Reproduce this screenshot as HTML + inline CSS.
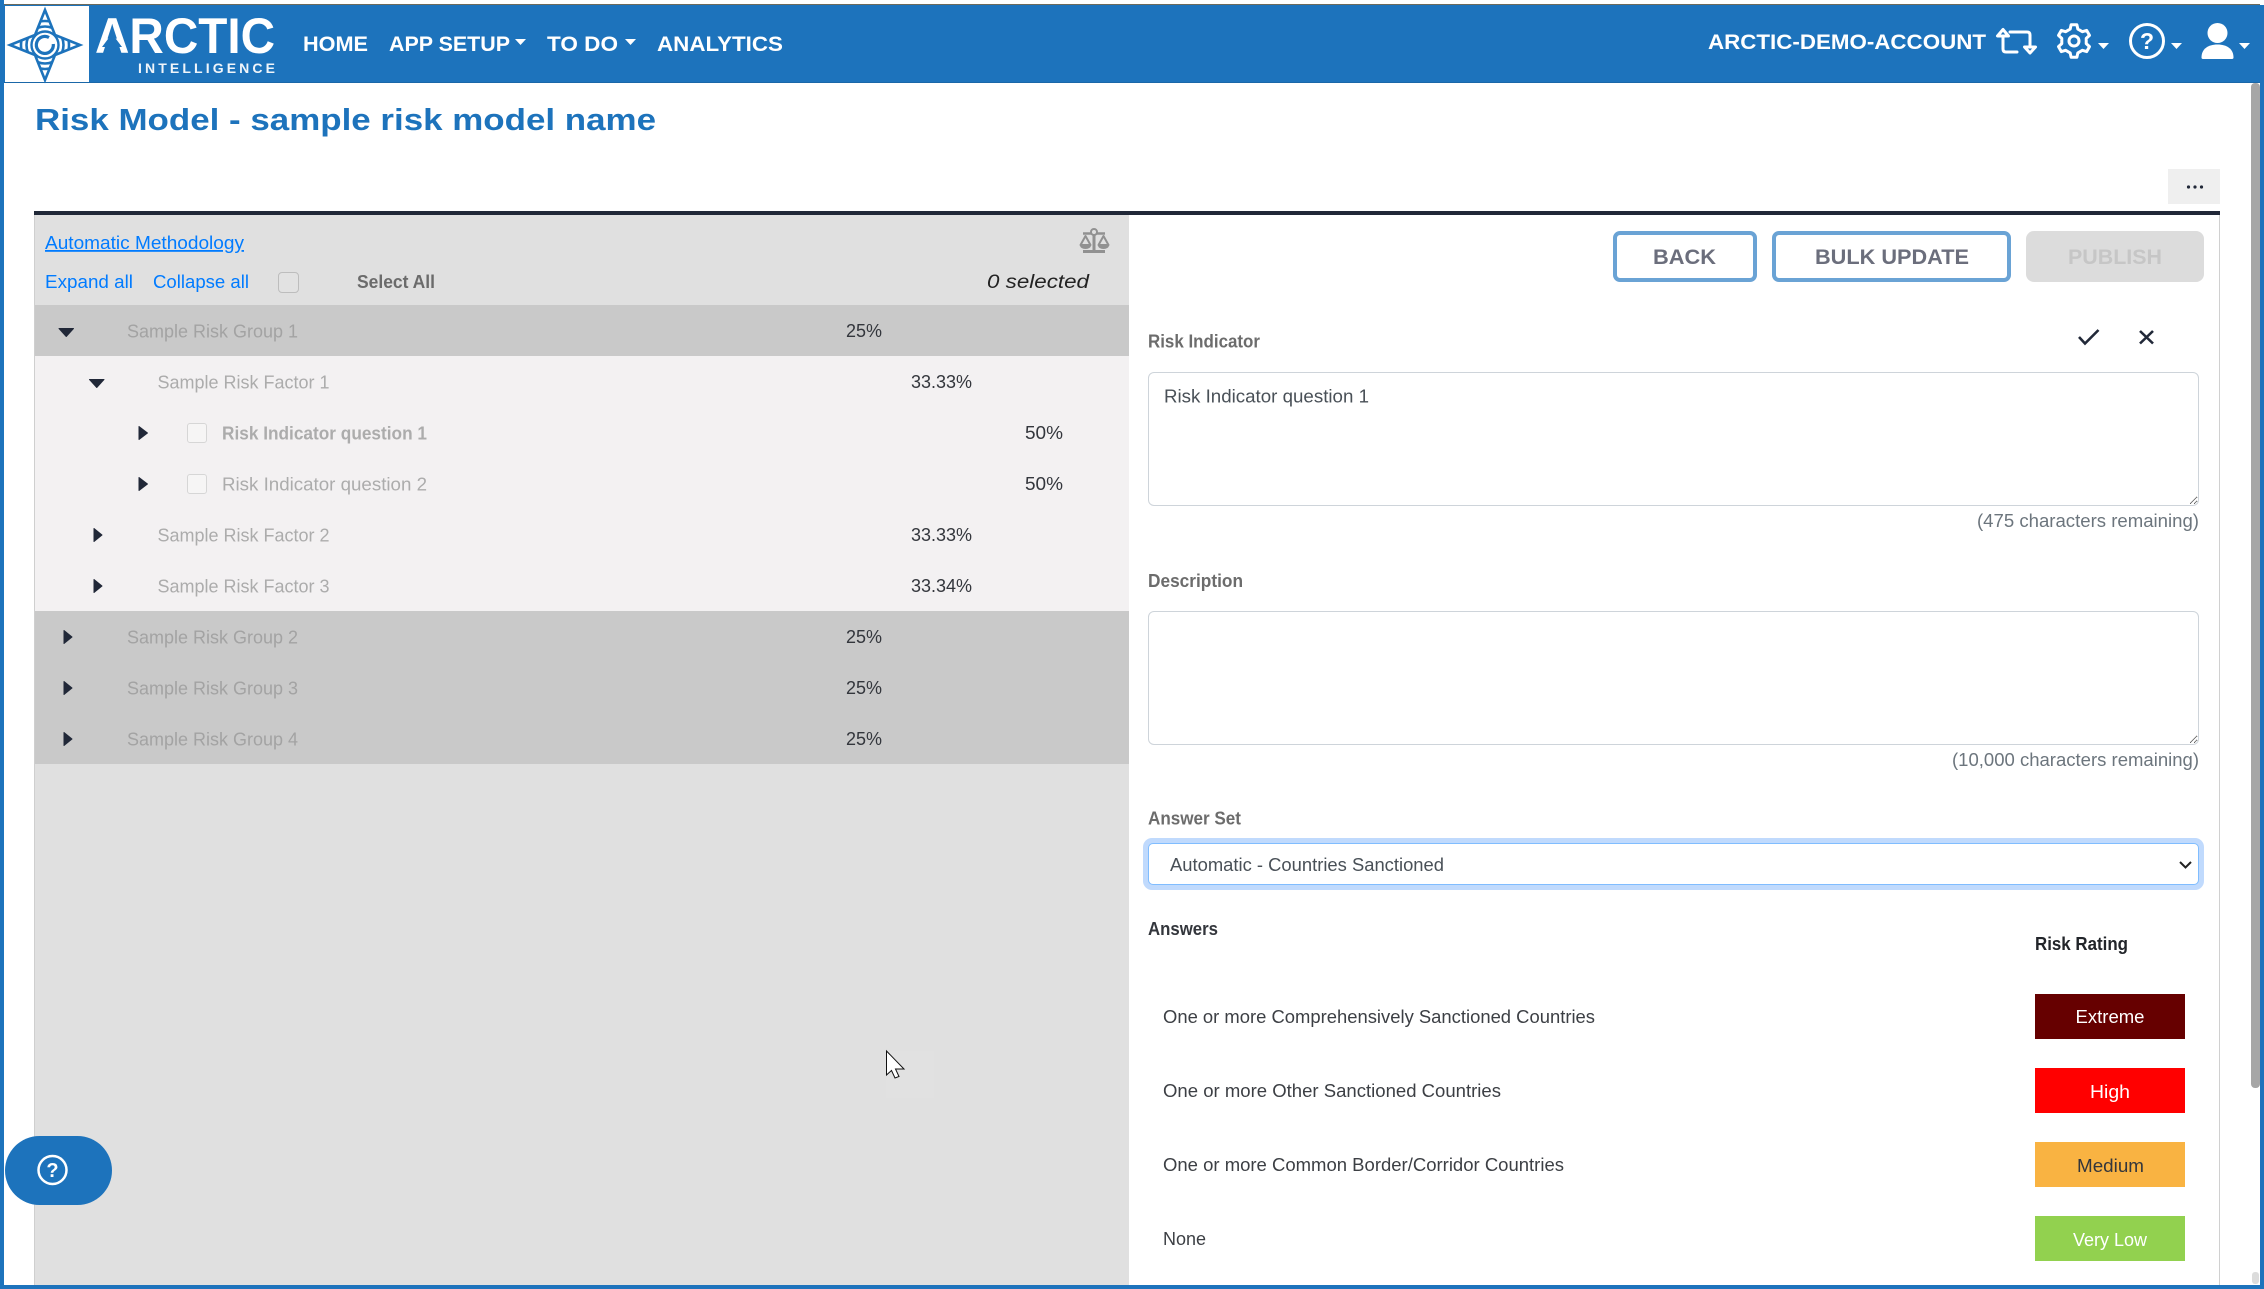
<!DOCTYPE html>
<html lang="en">
<head>
<meta charset="utf-8">
<title>Risk Model - sample risk model name</title>
<style>
html,body{margin:0;padding:0;width:2264px;height:1289px;overflow:hidden;background:#fff;font-family:"Liberation Sans",sans-serif}
.b{position:absolute;box-sizing:border-box}
textarea{position:absolute;box-sizing:border-box;margin:0;padding:0;background:#fff;border:1px solid #ced4da;border-radius:6px;outline:none;resize:vertical;left:1148px;width:1051px}
svg.o{position:absolute;left:0;top:0;width:2264px;height:1289px;pointer-events:none}
text{font-family:"Liberation Sans",sans-serif;font-size:18px}
.nav{font-size:21px;font-weight:700;fill:#fff}
.btn{font-size:21px;font-weight:700;fill:#6b6e7c}
.lnk{fill:#007bff}
.g{fill:#a3a3a3}
.f{fill:#acacac}
.p{fill:#33363c}
.l{font-weight:700;fill:#6c6c6c}
.a{fill:#3c3f44}
.m{fill:#6c757d}
</style>
</head>
<body>
<!-- frame -->
<div class="b" style="left:0;top:0;width:4px;height:1289px;background:#1d73bc"></div>
<div class="b" style="left:2260px;top:5px;width:4px;height:1284px;background:#1d73bc"></div>
<div class="b" style="left:0;top:1285px;width:2264px;height:4px;background:#1d73bc"></div>
<!-- header -->
<div class="b" style="left:4px;top:4px;width:2256px;height:1px;background:#6b6a5c"></div>
<div class="b" style="left:4px;top:5px;width:2256px;height:78px;background:#1d73bc;border-bottom:1px solid #1a67a8"></div>
<div class="b" style="left:5px;top:6px;width:84px;height:76px;background:#fff"></div>
<!-- more -->
<div class="b" style="left:2168px;top:169px;width:52px;height:35px;background:#efefef"></div>
<!-- main -->
<div class="b" style="left:34px;top:211px;width:2186px;height:4px;background:#212838"></div>
<div class="b" style="left:34px;top:215px;width:1095px;height:1070px;background:#e0e0e0;border-left:1px solid #cfcfcf"></div>
<div class="b" style="left:2219px;top:215px;width:1px;height:1070px;background:#d0d0d0"></div>
<div class="b" style="left:35px;top:305px;width:1094px;height:51px;background:#c9c9c9"></div>
<div class="b" style="left:35px;top:356px;width:1094px;height:255px;background:#f3f1f2"></div>
<div class="b" style="left:35px;top:611px;width:1094px;height:153px;background:#c9c9c9"></div>
<!-- checkboxes -->
<div class="b" style="left:278px;top:272px;width:21px;height:21px;border:1px solid #bdbdbd;border-radius:4px;background:#e2e2e2"></div>
<div class="b" style="left:187px;top:423px;width:20px;height:20px;border:1px solid #d6d6d6;border-radius:3px;background:#f6f5f5"></div>
<div class="b" style="left:187px;top:474px;width:20px;height:20px;border:1px solid #d6d6d6;border-radius:3px;background:#f6f5f5"></div>
<!-- buttons -->
<div class="b" style="left:1613px;top:231px;width:144px;height:51px;border:4px solid #6aa3d5;border-radius:7px;background:#fff"></div>
<div class="b" style="left:1772px;top:231px;width:239px;height:51px;border:4px solid #6aa3d5;border-radius:7px;background:#fff"></div>
<div class="b" style="left:2026px;top:231px;width:178px;height:51px;border-radius:8px;background:#dcdcdc"></div>
<!-- form -->
<textarea style="top:372px;height:134px" aria-label="Risk Indicator"></textarea>
<textarea style="top:611px;height:134px" aria-label="Description"></textarea>
<div class="b" style="left:1143px;top:838px;width:1061px;height:52px;border-radius:9px;background:#c0dafd"></div>
<div class="b" style="left:1148px;top:843px;width:1051px;height:42px;border:1px solid #80bdff;border-radius:5px;background:#fff"></div>
<!-- badges -->
<div class="b" style="left:2035px;top:994px;width:150px;height:45px;background:#660000"></div>
<div class="b" style="left:2035px;top:1068px;width:150px;height:45px;background:#ff0000"></div>
<div class="b" style="left:2035px;top:1142px;width:150px;height:45px;background:#f9b342"></div>
<div class="b" style="left:2035px;top:1216px;width:150px;height:45px;background:#92d14f"></div>
<!-- scrollbar -->
<div class="b" style="left:2251px;top:83px;width:9px;height:1005px;background:#a6a6a6;border-radius:4px"></div>
<div class="b" style="left:2252px;top:1272px;width:7px;height:12px;background:#dcdcdc;border-radius:3px"></div>
<!-- cursor ghost + help pill -->
<div class="b" style="left:886px;top:1051px;width:48px;height:47px;background:#e1e1e1"></div>
<div class="b" style="left:5px;top:1136px;width:107px;height:69px;border-radius:35px;background:#1d73bc"></div>

<svg class="o" viewBox="0 0 2264 1289" xmlns="http://www.w3.org/2000/svg">
<defs><clipPath id="st"><path d="M45 10L55 35L80 45L55 55L45 80L35 55L10 45L35 35Z"/></clipPath></defs>
<!-- logo -->
<g fill="none" stroke="#1d73bc">
<path stroke-width="2.600" stroke-linejoin="miter" d="M45 10L55 35L80 45L55 55L45 80L35 55L10 45L35 35Z"/>
<g clip-path="url(#st)" stroke-width="2.600"><circle cx="45" cy="45" r="18.500"/><circle cx="45" cy="45" r="24"/></g>
<circle cx="45" cy="45" r="13.500" stroke-width="2.400"/>
<path stroke-width="3.200" d="M49 37.500A8.500 8.500 0 1 0 53.300 44"/>
</g>
<text x="95" y="53" font-size="50" font-weight="700" fill="#fff" textLength="180" lengthAdjust="spacingAndGlyphs" style="font-size:50px">ARCTIC</text>
<path d="M109.500 37H114.500L122 47H102Z" fill="#1d73bc"/>
<text x="138" y="73" font-weight="700" fill="#f0f5fa" textLength="137" lengthAdjust="spacing" style="font-size:14px">INTELLIGENCE</text>
<!-- nav -->
<text class="nav" x="303" y="51" textLength="65" lengthAdjust="spacingAndGlyphs">HOME</text>
<text class="nav" x="389" y="51" textLength="121" lengthAdjust="spacingAndGlyphs">APP SETUP</text>
<path d="M515 39h11l-5.500 6z" fill="#fff"/>
<text class="nav" x="547" y="51" textLength="71" lengthAdjust="spacingAndGlyphs">TO DO</text>
<path d="M625 39h11l-5.500 6z" fill="#fff"/>
<text class="nav" x="657" y="51" textLength="126" lengthAdjust="spacingAndGlyphs">ANALYTICS</text>
<text class="nav" x="1708" y="49" textLength="278" lengthAdjust="spacingAndGlyphs">ARCTIC-DEMO-ACCOUNT</text>
<!-- swap icon -->
<g fill="none" stroke="#fff" stroke-width="3" stroke-linejoin="round" stroke-linecap="round">
<path d="M2003 37V49Q2003 52 2006 52H2017"/>
<path d="M2010 32H2027Q2030 32 2030 35V47"/>
<path d="M2003 29.500L1997.500 36H2008.500Z"/>
<path d="M2030 53L2035.500 47H2024.500Z"/>
</g>
<!-- gear -->
<g transform="translate(2074 41)" fill="none" stroke="#fff" stroke-width="3" stroke-linejoin="round">
<path d="M-3.860-11.890L-2.870-16.250L2.870-16.250L3.860-11.890L8.360-9.290L12.640-10.610L15.510-5.640L12.230-2.600L12.230 2.600L15.510 5.640L12.640 10.610L8.360 9.290L3.860 11.890L2.870 16.250L-2.870 16.250L-3.860 11.890L-8.360 9.290L-12.640 10.610L-15.510 5.640L-12.230 2.600L-12.230-2.600L-15.510-5.640L-12.640-10.610L-8.360-9.290Z"/>
<circle r="5"/>
</g>
<path d="M2098 43h11l-5.500 6z" fill="#fff"/>
<!-- help -->
<circle cx="2147" cy="41" r="16.500" fill="none" stroke="#fff" stroke-width="3"/>
<text x="2147" y="49" text-anchor="middle" font-weight="700" fill="#fff" style="font-size:23px">?</text>
<path d="M2171 43h11l-5.500 6z" fill="#fff"/>
<!-- user -->
<circle cx="2217.500" cy="33" r="10" fill="#fff"/>
<path d="M2203 59Q2201.500 59 2201.500 57.500C2201.500 49 2208 44.500 2217.500 44.500C2227 44.500 2233.500 49 2233.500 57.500Q2233.500 59 2232 59Z" fill="#fff"/>
<path d="M2239 43h11l-5.500 6z" fill="#fff"/>
<!-- title -->
<text x="35" y="130" font-weight="700" fill="#1d73bc" textLength="621" lengthAdjust="spacingAndGlyphs" style="font-size:31px">Risk Model - sample risk model name</text>
<!-- more dots -->
<g fill="#212838"><circle cx="2188.500" cy="187" r="1.600"/><circle cx="2195" cy="187" r="1.600"/><circle cx="2201.500" cy="187" r="1.600"/></g>
<!-- left toolbar -->
<text class="lnk" x="45" y="249" textLength="199" lengthAdjust="spacingAndGlyphs" text-decoration="underline">Automatic Methodology</text>
<text class="lnk" x="45" y="288" textLength="88" lengthAdjust="spacingAndGlyphs">Expand all</text>
<text class="lnk" x="153" y="288" textLength="96" lengthAdjust="spacingAndGlyphs">Collapse all</text>
<text x="357" y="288" font-weight="700" fill="#6b6b6b" textLength="78" lengthAdjust="spacingAndGlyphs">Select All</text>
<text x="987" y="288" font-style="italic" fill="#222" textLength="102" lengthAdjust="spacingAndGlyphs" style="font-size:19px">0 selected</text>
<!-- balance icon -->
<g fill="#919191" stroke="#919191">
<path d="M1094 233V251" stroke-width="3" fill="none"/>
<path d="M1083 233.500H1105" stroke-width="2.500" fill="none"/>
<path d="M1083 251.500H1105" stroke-width="3" fill="none"/>
<circle cx="1094" cy="232" r="3" fill="#e0e0e0" stroke-width="2"/>
<path d="M1085.500 236L1080.500 245H1090.500Z" fill="#e0e0e0" stroke-width="2" stroke-linejoin="round"/>
<path d="M1080 245.500A5.500 3.500 0 0 0 1091 245.500Z" stroke="none"/>
<path d="M1103.500 236L1098.500 245H1108.500Z" fill="#e0e0e0" stroke-width="2" stroke-linejoin="round"/>
<path d="M1098 245.500A5.500 3.500 0 0 0 1109 245.500Z" stroke="none"/>
</g>
<!-- tree arrows -->
<g fill="#212838" stroke="#212838" stroke-width="1" stroke-linejoin="round">
<path d="M59 328.500H73.500L66.250 336.500Z"/>
<path d="M89.500 379.500H104L96.750 387.500Z"/>
<path d="M139 426.500L147.500 433L139 439.500Z"/>
<path d="M139 477.500L147.500 484L139 490.500Z"/>
<path d="M94 528.500L102 535L94 541.500Z"/>
<path d="M94 579.500L102 586L94 592.500Z"/>
<path d="M64 630.500L72 637L64 643.500Z"/>
<path d="M64 681.500L72 688L64 694.500Z"/>
<path d="M64 732.500L72 739L64 745.500Z"/>
</g>
<!-- tree text -->
<text class="g" x="127" y="337.500" textLength="171" lengthAdjust="spacingAndGlyphs">Sample Risk Group 1</text>
<text class="p" x="846" y="337" textLength="36" lengthAdjust="spacingAndGlyphs">25%</text>
<text class="f" x="157.500" y="388.500" textLength="172" lengthAdjust="spacingAndGlyphs">Sample Risk Factor 1</text>
<text class="p" x="911" y="388" textLength="61" lengthAdjust="spacingAndGlyphs">33.33%</text>
<text class="f" x="222" y="439.500" font-weight="700" textLength="205" lengthAdjust="spacingAndGlyphs">Risk Indicator question 1</text>
<text class="p" x="1025" y="439" textLength="38" lengthAdjust="spacingAndGlyphs">50%</text>
<text class="f" x="222" y="490.500" textLength="205" lengthAdjust="spacingAndGlyphs">Risk Indicator question 2</text>
<text class="p" x="1025" y="490" textLength="38" lengthAdjust="spacingAndGlyphs">50%</text>
<text class="f" x="157.500" y="541.500" textLength="172" lengthAdjust="spacingAndGlyphs">Sample Risk Factor 2</text>
<text class="p" x="911" y="541" textLength="61" lengthAdjust="spacingAndGlyphs">33.33%</text>
<text class="f" x="157.500" y="592.500" textLength="172" lengthAdjust="spacingAndGlyphs">Sample Risk Factor 3</text>
<text class="p" x="911" y="592" textLength="61" lengthAdjust="spacingAndGlyphs">33.34%</text>
<text class="g" x="127" y="643.500" textLength="171" lengthAdjust="spacingAndGlyphs">Sample Risk Group 2</text>
<text class="p" x="846" y="643" textLength="36" lengthAdjust="spacingAndGlyphs">25%</text>
<text class="g" x="127" y="694.500" textLength="171" lengthAdjust="spacingAndGlyphs">Sample Risk Group 3</text>
<text class="p" x="846" y="694" textLength="36" lengthAdjust="spacingAndGlyphs">25%</text>
<text class="g" x="127" y="745.500" textLength="171" lengthAdjust="spacingAndGlyphs">Sample Risk Group 4</text>
<text class="p" x="846" y="745" textLength="36" lengthAdjust="spacingAndGlyphs">25%</text>
<!-- buttons text -->
<text class="btn" x="1653" y="264" textLength="63" lengthAdjust="spacingAndGlyphs">BACK</text>
<text class="btn" x="1815" y="264" textLength="154" lengthAdjust="spacingAndGlyphs">BULK UPDATE</text>
<text class="btn" x="2068" y="264" textLength="94" lengthAdjust="spacingAndGlyphs" style="fill:#c6c6c6">PUBLISH</text>
<!-- check / x -->
<g fill="none" stroke="#212838" stroke-width="2.600">
<path d="M2079 337L2085 343.500L2098.500 330"/>
<path d="M2140 331L2153 343.500M2153 331L2140 343.500"/>
</g>
<!-- form text -->
<text class="l" x="1148" y="347.500" textLength="112" lengthAdjust="spacingAndGlyphs">Risk Indicator</text>
<text x="1164" y="402.500" fill="#495057" textLength="205" lengthAdjust="spacingAndGlyphs">Risk Indicator question 1</text>
<text class="m" x="1977" y="527" textLength="222" lengthAdjust="spacingAndGlyphs">(475 characters remaining)</text>
<text class="l" x="1148" y="587" textLength="95" lengthAdjust="spacingAndGlyphs">Description</text>
<text class="m" x="1952" y="766" textLength="247" lengthAdjust="spacingAndGlyphs">(10,000 characters remaining)</text>
<text class="l" x="1148" y="824.500" textLength="93" lengthAdjust="spacingAndGlyphs">Answer Set</text>
<text x="1170" y="871" fill="#495057" textLength="274" lengthAdjust="spacingAndGlyphs">Automatic - Countries Sanctioned</text>
<path d="M2180 862L2185.500 867.500L2191 862" fill="none" stroke="#222" stroke-width="2"/>
<text x="1148" y="935" font-weight="700" fill="#33363c" textLength="70" lengthAdjust="spacingAndGlyphs">Answers</text>
<text x="2035" y="950" font-weight="700" fill="#22252a" textLength="93" lengthAdjust="spacingAndGlyphs">Risk Rating</text>
<text class="a" x="1163" y="1023" textLength="432" lengthAdjust="spacingAndGlyphs">One or more Comprehensively Sanctioned Countries</text>
<text class="a" x="1163" y="1097" textLength="338" lengthAdjust="spacingAndGlyphs">One or more Other Sanctioned Countries</text>
<text class="a" x="1163" y="1171" textLength="401" lengthAdjust="spacingAndGlyphs">One or more Common Border/Corridor Countries</text>
<text class="a" x="1163" y="1245" textLength="43" lengthAdjust="spacingAndGlyphs">None</text>
<text x="2075.500" y="1023" fill="#fff" textLength="69" lengthAdjust="spacingAndGlyphs">Extreme</text>
<text x="2090" y="1098" fill="#fff" textLength="40" lengthAdjust="spacingAndGlyphs">High</text>
<text x="2077" y="1172" fill="#33363c" textLength="67" lengthAdjust="spacingAndGlyphs">Medium</text>
<text x="2073" y="1246" fill="#fff" textLength="74" lengthAdjust="spacingAndGlyphs">Very Low</text>
<!-- help pill icon -->
<circle cx="52.500" cy="1170" r="14" fill="none" stroke="#fff" stroke-width="2.500"/>
<text x="52.500" y="1177" text-anchor="middle" font-weight="700" fill="#fff" style="font-size:20px">?</text>
<!-- cursor -->
<path d="M886.500 1051V1075L891.500 1070.500L895 1078L899 1076.500L895.500 1069H904Z" fill="#fff" stroke="#111" stroke-width="1"/>
</svg>
</body>
</html>
